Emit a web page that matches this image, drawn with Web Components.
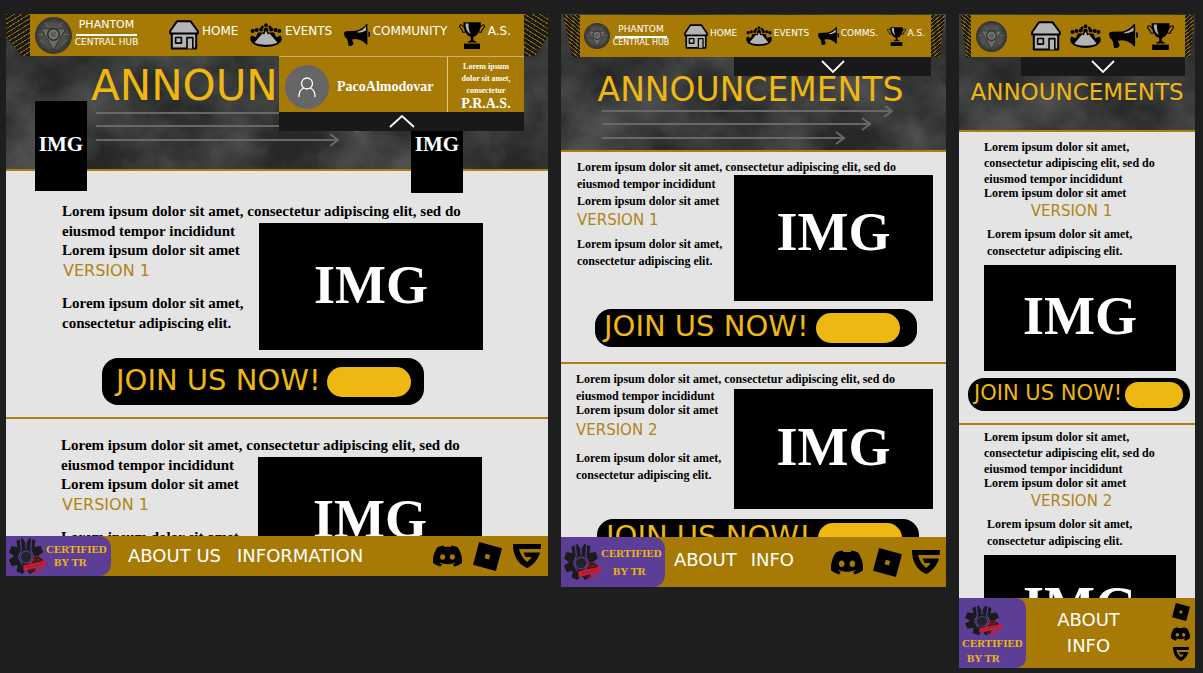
<!DOCTYPE html>
<html lang="en">
<head>
<meta charset="utf-8">
<meta name="viewport" content="width=device-width, initial-scale=1">
<title>Phantom Central Hub</title>
<style>
  :root {
    --gold: #a67a05;
    --yellow: #eeb711;
    --ink: #191919;
    --paper: #e4e4e4;
    --purple: #5c3e96;
    --display: "DejaVu Sans", sans-serif;
    --serif: "Liberation Serif", serif;
  }
  body { margin: 0; background: #1e1e1e; font-family: var(--serif); }
</style>
</head>
<body>
<design-board>
  <site-frame size="wide">
    <site-hero slot="top" size="wide">
      <site-header slot="header" size="wide">
        <nav-item icon="home" size="wide">HOME</nav-item>
        <nav-item icon="events" size="wide">EVENTS</nav-item>
        <nav-item icon="horn" size="wide">COMMUNITY</nav-item>
        <nav-item icon="trophy" size="wide">A.S.</nav-item>
      </site-header>
      ANNOUNCEMENTS
    </site-hero>
    <news-card size="wide" version="VERSION 1" first></news-card>
    <news-card size="wide" version="VERSION 1" plain></news-card>
    <site-footer slot="bottom" size="wide">
      <a href="#about">ABOUT US</a><a href="#info">INFORMATION</a>
    </site-footer>
  </site-frame>

  <site-frame size="mid">
    <site-hero slot="top" size="mid">
      <site-header slot="header" size="mid">
        <nav-item icon="home" size="mid">HOME</nav-item>
        <nav-item icon="events" size="mid">EVENTS</nav-item>
        <nav-item icon="horn" size="mid">COMMS.</nav-item>
        <nav-item icon="trophy" size="mid">A.S.</nav-item>
      </site-header>
      ANNOUNCEMENTS
    </site-hero>
    <news-card size="mid" version="VERSION 1" first></news-card>
    <news-card size="mid" version="VERSION 2"></news-card>
    <site-footer slot="bottom" size="mid">
      <a href="#about">ABOUT</a><a href="#info">INFO</a>
    </site-footer>
  </site-frame>

  <site-frame size="narrow">
    <site-hero slot="top" size="narrow">
      <site-header slot="header" size="narrow">
        <nav-item icon="home" size="narrow" label="Home"></nav-item>
        <nav-item icon="events" size="narrow" label="Events"></nav-item>
        <nav-item icon="horn" size="narrow" label="Community"></nav-item>
        <nav-item icon="trophy" size="narrow" label="A.S."></nav-item>
      </site-header>
      ANNOUNCEMENTS
    </site-hero>
    <news-card size="narrow" version="VERSION 1" first></news-card>
    <news-card size="narrow" version="VERSION 2" plain></news-card>
    <site-footer slot="bottom" size="narrow">
      <a href="#about">ABOUT</a><a href="#info">INFO</a>
    </site-footer>
  </site-frame>
</design-board>

<script>
class Base extends HTMLElement {
  constructor() {
    super();
    this.attachShadow({ mode: 'open' });
  }
  connectedCallback() {
    this.shadowRoot.innerHTML = this.render();
  }
  get size() { return this.getAttribute('size') || 'wide'; }
}

/* ---------- icons ---------- */
const gearTeeth = [22, 67, 112, 157, 202, 247, 292, 337]
  .map(a => `<path d="M15.500 1h7l1.500 8H14z" transform="rotate(${a} 19 19)"/>`).join('');

const ICONS = {
  home: ['0 0 30 30', `<g fill="#b4b4b4" stroke="#000" stroke-width="2" stroke-linejoin="round">
      <path d="M2.8 13h24.4v15.6H2.8z"/>
      <path d="M8 1.3h13.6L28.8 11v2.6H1.2V11z"/>
      <path d="M6.600 17.500h5.800v5.600H6.600zM18 28.400V17.600h5.800v10.800" stroke-width="1.600"/></g>`],
  events: ['0 0 32 24', `<path d="M1.400 12.500C.2 14 0 16 .6 17.600 2.400 22 9 24 16 24s13.600-2 15.400-6.400c.6-1.600.4-3.600-.8-5.100L27 14H5z"/>
      <path d="M6 14 8 9.500h16L26 14z"/>
      <g><circle cx="2.600" cy="8" r="2"/><circle cx="6.600" cy="7" r="2"/><circle cx="11" cy="6.600" r="2"/><circle cx="16" cy="2.200" r="1.900"/><circle cx="12.400" cy="4" r="1.500"/><circle cx="19.800" cy="4" r="1.500"/><circle cx="21.400" cy="6.600" r="2"/><circle cx="25.600" cy="7" r="2"/><circle cx="29.400" cy="8" r="2"/><path d="M13.800 10V6q2.200-3 4.400 0v4z"/></g>
      <path d="M4.600 19.600 12.400 10.600l1.800.8L16 7.400l1.800 4 1.800-.8L27.400 19.600C23.500 22.600 8.500 22.600 4.600 19.600z" fill="#b4b4b4"/>`],
  horn: ['0 0 26 22', `<path d="M0 9.6C0 8 1 7.4 2.4 7.2L12 6.8C16 6 20 3.4 22.4 0h1V20.4h-1c-2.4-3-6-4.600-10-5.400l-4.500.4 1.700 4.400-1.600 2-3.400.2-1-5.600L2.400 14 1 13.400z"/>
      <path d="M24.400 7.400l1.600.8v4l-1.600.8z"/><path d="M13.600 7.800Q19 6.400 22 2.600v3.800Q18 8.600 13.600 8.800z" fill="#b4b4b4"/>`],
  trophy: ['0 0 26 27', `<path d="M4.400.2h17.400C21.800 8 19 13.600 14.400 15v3.200l3 1.600v.6H8.800v-.6l3-1.600V15C7.200 13.600 4.400 8 4.400.2z"/>
      <path d="M5 5.600C4 2.600.600 2 .600 4.400c0 2 3 2.200 3 5.600 2.400.8 3.400-.6 2.800-2M21.200 5.600c1-3 4.300-3.600 4.300-1.200 0 2-3 2.200-3 5.600-2.400.8-3.400-.6-2.800-2" fill="none" stroke="#000" stroke-width="1.100"/>
      <path d="M5 21.600h16V27H5z"/><path d="M6.500 1.500h3c0 4 .6 8 2 10.400C8.500 10.500 6.500 6.500 6.500 1.500z" fill="#b4b4b4"/>`],
  discord: ['0 2.500 24 19', `<path d="M20.317 4.3698a19.7913 19.7913 0 00-4.8851-1.5152.0741.0741 0 00-.0785.0371c-.211.3753-.4447.8648-.6083 1.2495-1.8447-.2762-3.68-.2762-5.4868 0-.1636-.3933-.4058-.8742-.6177-1.2495a.077.077 0 00-.0785-.037 19.7363 19.7363 0 00-4.8852 1.515.0699.0699 0 00-.0321.0277C.5334 9.0458-.319 13.5799.0992 18.0578a.0824.0824 0 00.0312.0561c2.0528 1.5076 4.0413 2.4228 5.9929 3.0294a.0777.0777 0 00.0842-.0276c.4616-.6304.8731-1.2952 1.226-1.9942a.076.076 0 00-.0416-.1057c-.6528-.2476-1.2743-.5495-1.8722-.8923a.077.077 0 01-.0076-.1277c.1258-.0943.2517-.1923.3718-.2914a.0743.0743 0 01.0776-.0105c3.9278 1.7933 8.18 1.7933 12.0614 0a.0739.0739 0 01.0785.0095c.1202.099.246.1981.3728.2924a.077.077 0 01-.0066.1276 12.2986 12.2986 0 01-1.873.8914.0766.0766 0 00-.0407.1067c.3604.698.7719 1.3628 1.225 1.9932a.076.076 0 00.0842.0286c1.961-.6067 3.9495-1.5219 6.0023-3.0294a.077.077 0 00.0313-.0552c.5004-5.177-.8382-9.6739-3.5485-13.6604a.061.061 0 00-.0312-.0286zM8.02 15.3312c-1.1825 0-2.1569-1.0857-2.1569-2.419 0-1.3332.9555-2.4189 2.157-2.4189 1.2108 0 2.1757 1.0952 2.1568 2.419 0 1.3332-.9555 2.4189-2.1569 2.4189zm7.9748 0c-1.1825 0-2.1569-1.0857-2.1569-2.419 0-1.3332.9554-2.4189 2.1569-2.4189 1.2108 0 2.1757 1.0952 2.1568 2.419 0 1.3332-.946 2.4189-2.1568 2.4189Z"/>`],
  roblox: ['0 0 24 24', `<path fill-rule="evenodd" d="M18.926 23.998 0 18.892 5.075.002 24 5.108zM14.200 10.800l-3.600-1-1 3.600 3.600 1z"/>`],
  guilded: ['0 0 28 24', `<path d="M0 0H28L27.700 5H6C7 9 9.500 14.500 14 18C16 16.500 17.500 15 18.600 13H12.500L10.500 8.500H27C25.500 15 20 21.500 14 24C5 20 0 12 0 0Z"/>`],
  user: ['0 0 44 44', `<circle cx="22" cy="22" r="22" fill="#666"/><g fill="none" stroke="#fff" stroke-width="1.300"><circle cx="22" cy="18.500" r="5.500"/><path d="M14 32q0-7.500 5-9M30 32q0-7.500-5-9"/></g>`],
  emblem: ['0 0 36 36', `<defs><radialGradient id="e"><stop offset="0" stop-color="#5c5c5a"/><stop offset=".7" stop-color="#4c4d4b"/><stop offset="1" stop-color="#333"/></radialGradient></defs>
      <circle cx="18" cy="18" r="17.300" fill="url(#e)" stroke="#3a3a38" stroke-width="1.400"/>
      <path d="M6 11.500h24L18 32z" fill="#6b6c69" stroke="#343432"/><path d="M9 5l5 5M27 5l-5 5M5 22l4 4M31 22l-5 5M3 17h5M28 17h5" stroke="#666663"/>
      <circle cx="18" cy="17" r="5.600" fill="#747471" stroke="#31312f" stroke-width="1.600"/><circle cx="18" cy="17" r="2.800" fill="#5c5c59"/>`],
  gear: ['0 0 40 38', `<g fill="#191b1c">${gearTeeth}<circle cx="19" cy="19" r="13"/></g>
      <path d="M13 1l1 12-3 7 4 8M25 1l-1 12 3 7-4 8M19 0v12" fill="none" stroke="#57408e" stroke-width="1.300"/>
      <circle cx="19" cy="20" r="6" fill="#202426" stroke="#4f3984" stroke-width="1.300"/>
      <g fill="none" stroke="#d31b2c" stroke-width=".7"><ellipse cx="30" cy="28" rx="8" ry="8.500"/><ellipse cx="30" cy="28" rx="5.500" ry="6"/><path d="M24 25l11 9M26 22l9 9M24 31l9-9M27 35l9-9"/></g>
      <path d="M16 28.500l24-5-.6 5-23 5.500z" fill="#d31b2c"/><path d="M20 30.200l3-.7m1.500-.3 3-.7m1.500-.3 3-.7m1.500-.3 2.500-.6" stroke="#7d2848" stroke-width="1.400"/>`],
  up: ['0 0 26 13', `<path d="M1 12 13 1l12 11" fill="none" stroke="#fff" stroke-width="1.800"/>`],
  down: ['0 0 24 13', `<path d="M1 1l11 11L23 1" fill="none" stroke="#fff" stroke-width="1.800"/>`],
};

customElements.define('ui-icon', class extends Base {
  render() {
    const [box, body] = ICONS[this.getAttribute('name')];
    return `<style>
      :host { display: block; flex: none; }
      svg { display: block; width: 100%; height: 100%; }
    </style><svg viewBox="${box}" preserveAspectRatio="none" aria-hidden="true">${body}</svg>`;
  }
});

/* ---------- page scaffolding ---------- */
customElements.define('design-board', class extends Base {
  render() {
    return `<style>
      :host {
        display: grid;
        grid-template-columns: 542fr 385fr 236fr;
        gap: 13px;
        align-items: start;
        padding: 14px 8px 4px 6px;
      }
    </style><slot></slot>`;
  }
});

customElements.define('site-frame', class extends Base {
  render() {
    const h = { wide: 562, mid: 573, narrow: 654 }[this.size];
    return `<style>
      :host { display: flex; flex-direction: column; height: ${h}px; min-width: 0; }
      main { flex: 1; min-height: 0; overflow: hidden; background: var(--paper); }
    </style><slot name="top"></slot><main><slot></slot></main><slot name="bottom"></slot>`;
  }
});

customElements.define('site-hero', class extends Base {
  render() {
    const s = this.size;
    const lines = [290, 268, 242].map((w, i) => {
      const y = [5, 18, 32][i];
      return `<path d="M0 ${y}H${w}M${w - 8} ${y - 6}L${w} ${y}L${w - 8} ${y + 6}"/>`;
    }).join('');
    return `<style>
      :host {
        display: block; position: relative; z-index: 1; box-sizing: border-box;
        border-bottom: 2px solid #ab7f10; background: #272828;
      }
      :host([size=wide]) { height: 157px; }
      :host([size=mid]) { height: 138px; }
      :host([size=narrow]) { height: 118px; }
      .rock { position: absolute; inset: 0; width: 100%; height: 100%; }
      .over { position: relative; }
      h1 { margin: 0; font: 42px/44px var(--display); color: var(--yellow); white-space: nowrap; }
      .lines { display: block; width: 300px; height: 40px; fill: none; stroke: #686868; stroke-width: 2; }
      :host([size=wide]) h1 { margin: 8px 0 0 85px; }
      :host([size=wide]) .lines { margin-left: 90px; }
      :host([size=mid]) h1 { margin: 17px 6px 0 0; font-size: 33px; line-height: 32px; text-align: center; }
      :host([size=mid]) .lines { margin-left: 41px; }
      :host([size=narrow]) h1 { margin-top: 23px; font-size: 23px; line-height: 24px; text-align: center; }
      .img {
        position: absolute; top: 87px; box-sizing: border-box; width: 52px; height: 90px;
        padding-top: 31px; background: #000; color: #fff; text-align: center;
        font: bold 21px/24px var(--serif);
      }
      .one { left: 29px; }
      .two { left: 405px; height: 92px; }
      .head { position: relative; z-index: 2; }
    </style>
    <svg class="rock" aria-hidden="true">
      <filter id="r" x="0" y="0" width="100%" height="100%">
        <feTurbulence type="fractalNoise" baseFrequency=".012 .016" numOctaves="5" seed="7"/>
        <feColorMatrix values="0 0 0 0 .25  0 0 0 0 .27  0 0 0 0 .25  2.200 0 0 0 -.7"/>
      </filter>
      <filter id="d" x="0" y="0" width="100%" height="100%">
        <feTurbulence type="fractalNoise" baseFrequency=".03" numOctaves="4" seed="21"/>
        <feColorMatrix values="0 0 0 0 .1  0 0 0 0 .1  0 0 0 0 .1  0 3 0 0 -1.500"/>
      </filter>
      <rect width="100%" height="100%" filter="url(#r)" opacity=".4"/>
      <rect width="100%" height="100%" filter="url(#d)" opacity=".35"/>
    </svg>
    <div class="over">
      <div class="head"><slot name="header"></slot></div>
      <h1><slot></slot></h1>
      ${s === 'narrow' ? '' : `<svg class="lines" viewBox="0 0 300 40" aria-hidden="true">${lines}</svg>`}
    </div>
    ${s === 'wide' ? '<div class="img one">IMG</div><div class="img two">IMG</div>' : ''}`;
  }
});
</script>
<script>
customElements.define('site-header', class extends Base {
  render() {
    const s = this.size;
    return `<style>
      :host { display: flex; position: relative; z-index: 3; height: 42px; }
      :host([size=wide]) { --left: 24px; --right: 24px; --disc: 37px; }
      :host([size=mid]) { --left: 19px; --right: 15px; --disc: 26px; padding-top: 1px; }
      :host([size=narrow]) { --left: 12px; --right: 10px; --disc: 31px; padding-top: 1px; }
      .hatch { flex: none; --stripe: #866407; }
      .l { width: var(--left); background: repeating-linear-gradient(148deg, var(--stripe) 0 1px, var(--ink) 1px 4px); clip-path: polygon(0 0, 100% 0, 100% 100%, 65% 100%, 0 55%); }
      .r { width: var(--right); background: repeating-linear-gradient(212deg, var(--stripe) 0 1px, var(--ink) 1px 4px); clip-path: polygon(0 0, 100% 0, 100% 55%, 45% 100%, 0 100%); }
      :host([size=mid]) .l, :host([size=narrow]) .l { background: repeating-linear-gradient(220deg, var(--stripe) 0 1px, var(--ink) 1px 3px); clip-path: polygon(10% 0, 100% 0, 100% 100%, 60% 100%); }
      :host([size=mid]) .r, :host([size=narrow]) .r { background: repeating-linear-gradient(140deg, var(--stripe) 0 1px, var(--ink) 1px 3px); clip-path: polygon(0 0, 95% 0, 55% 100%, 0 100%); }
      .bar { flex: 1; min-width: 0; display: flex; align-items: center; background: var(--gold); padding-left: 5px; }
      .disc { width: var(--disc); height: var(--disc); }
      .brand { flex: none; color: #fff; font-family: var(--display); text-align: center; margin-left: 1px; width: 67px; text-decoration: none; white-space: nowrap; }
      .brand b { display: block; font-weight: normal; font-size: 11px; line-height: 18px; }
      .brand i { display: block; height: 2px; background: #fff; margin: 0 3px; }
      .brand small { display: block; font-size: 9px; line-height: 12px; }
      :host([size=wide]) .brand { margin-bottom: 6px; }
      :host([size=mid]) .bar { padding-left: 4px; }
      :host([size=mid]) .brand { width: 58px; margin-left: 2px; margin-bottom: 2px; }
      :host([size=mid]) .brand b { font-size: 9px; line-height: 14px; }
      :host([size=mid]) .brand small { font-size: 8px; line-height: 10px; }
      nav { flex: 1; display: flex; align-items: center; justify-content: space-between; margin: 0 13px 0 29px; }
      :host([size=mid]) nav { margin: 0 6px 0 14px; }
      :host([size=narrow]) nav { margin: 0 11px 0 24px; }
      .tab { position: absolute; top: 100%; right: var(--right); display: grid; width: 245px; }
      .tab button { display: grid; place-items: center; height: 19px; padding: 0; border: 0; background: var(--ink); }
      .tab ui-icon { width: 24px; height: 13px; }
      :host([size=wide]) .tab button ui-icon { width: 26px; }
      :host([size=mid]) .tab { width: 197px; }
      :host([size=narrow]) .tab { width: 164px; }
      .panel { display: flex; height: 56px; box-sizing: border-box; background: var(--gold); border-top: 1px solid #c9b06f; color: #fff; font-weight: bold; }
      .who { flex: 1; display: flex; align-items: center; gap: 8px; padding: 4px 0 0 6px; border-right: 1px solid #dcc68a; font-size: 14px; line-height: 20px; }
      .who ui-icon { width: 44px; height: 44px; }
      .note { width: 76px; text-align: center; font-size: 8px; line-height: 12px; padding-top: 4px; }
      .note p { margin: 0 8px; }
      .note strong { display: block; font-size: 14px; line-height: 14px; }
    </style>
    <div class="hatch l"></div>
    <div class="bar">
      <ui-icon class="disc" name="emblem"></ui-icon>
      ${s === 'narrow' ? '' : '<a class="brand" href="#top"><b>PHANTOM</b><i></i><small>CENTRAL HUB</small></a>'}
      <nav><slot></slot></nav>
    </div>
    <div class="hatch r"></div>
    <div class="tab">
      ${s === 'wide' ? `<div class="panel">
        <div class="who"><ui-icon name="user"></ui-icon>PacoAlmodovar</div>
        <div class="note"><p>Lorem ipsum dolor sit amet, consectetur</p><strong>P.R.A.S.</strong></div>
      </div>` : ''}
      <button type="button" aria-label="Account panel"><ui-icon name="${s === 'wide' ? 'up' : 'down'}"></ui-icon></button>
    </div>`;
  }
});

customElements.define('nav-item', class extends Base {
  render() {
    const icon = this.getAttribute('icon');
    const label = this.getAttribute('label');
    const [w, h] = {
      wide: { home: [30, 30], events: [32, 24], horn: [26, 22], trophy: [26, 27] },
      mid: { home: [24, 25], events: [26, 20], horn: [21, 18], trophy: [19, 19] },
      narrow: { home: [30, 30], events: [31, 24], horn: [29, 24], trophy: [27, 27] },
    }[this.size][icon];
    return `<style>
      :host { display: block; }
      a { display: flex; align-items: center; gap: 3px; color: #fff; text-decoration: none; font: 12px/14px var(--display); white-space: nowrap; }
      span { padding-bottom: 9px; }
      :host([size=mid]) a { font-size: 9px; line-height: 12px; gap: 2px; }
      :host([size=mid]) span { padding-bottom: 6px; }
      ui-icon { width: ${w}px; height: ${h}px; }
    </style><a href="#${icon}"${label ? ` aria-label="${label}"` : ''}><ui-icon name="${icon}"></ui-icon>${label ? '' : '<span><slot></slot></span>'}</a>`;
  }
});

/* ---------- announcements ---------- */
customElements.define('join-button', class extends Base {
  render() {
    return `<style>
      :host { display: block; }
      button {
        display: flex; align-items: center; justify-content: space-between; box-sizing: border-box;
        width: 322px; height: 47px; padding: 0 13px 0 14px; border: 0; border-radius: 16px;
        background: #000; color: var(--yellow); font: 29px/36px var(--display); white-space: nowrap;
      }
      .txt { padding-bottom: 4px; }
      .pill { width: 84px; height: 30px; border-radius: 15px; background: var(--yellow); }
      :host([size=mid]) button { height: 38px; padding: 0 17px 0 9px; }
      :host([size=narrow]) button { width: 222px; height: 33px; padding: 0 7px 0 6px; font-size: 21px; line-height: 24px; }
      :host([size=narrow]) .pill { width: 58px; height: 26px; }
    </style><button type="button"><span class="txt">JOIN US NOW!</span><span class="pill"></span></button>`;
  }
});

customElements.define('news-card', class extends Base {
  render() {
    return `<style>
      :host {
        display: block; border-bottom: 2px solid #ab7f10; color: #000;
        font: bold 15px/20px var(--serif);
      }
      .body { display: grid; grid-template-columns: 1fr 224px; grid-template-rows: auto auto auto 1fr; padding: 16px 66px 0 55px; }
      :host([first]) .body { padding: 30px 65px 0 56px; }
      p, h2, figure { margin: 0; }
      .lead { grid-area: 1 / 1 / 2 / 3; }
      .sub { grid-area: 2 / 1; line-height: 18px; }
      h2 { grid-area: 3 / 1; font: 16px/24px var(--display); color: #ae8417; padding-left: 1px; }
      .more { grid-area: 4 / 1; padding-top: 10px; }
      figure { grid-area: 1 / 2 / 5 / 3; display: grid; place-items: center; box-sizing: border-box; margin-top: 22px; padding-bottom: 4px; height: 127px; background: #000; color: #fff; font-size: 54px; line-height: 60px; }
      join-button { margin: 8px 0 12px 96px; }

      :host([size=mid]) { font-size: 12px; line-height: 17px; }
      :host([size=mid]) .body { grid-template-columns: 1fr 199px; padding: 7px 13px 0 15px; }
      :host([size=mid][first]) .body { padding-left: 16px; }
      :host([size=mid]) .sub { line-height: 10px; }
      :host([size=mid]) h2 { font-size: 15px; line-height: 22px; padding: 4px 0 0 0; }
      :host([size=mid]) .more { padding-top: 9px; }
      :host([size=mid]) figure { margin-top: 18px; height: 120px; }
      :host([size=mid]) join-button { margin: 10px 0 15px 36px; }
      :host([size=mid][first]) .sub { line-height: 16px; }
      :host([size=mid][first]) h2 { padding-top: 0; }
      :host([size=mid][first]) .more { padding-top: 5px; }
      :host([size=mid][first]) figure { margin-top: 16px; height: 126px; padding-bottom: 12px; }
      :host([size=mid][first]) join-button { margin: 8px 0 15px 34px; }

      :host([size=narrow]) { font-size: 12px; line-height: 16px; }
      :host([size=narrow]) .body { display: block; padding: 4px 19px 0 25px; }
      :host([size=narrow][first]) .body { padding-top: 7px; }
      :host([size=narrow]) .sub { line-height: 12px; }
      :host([size=narrow]) h2 { font-size: 15px; line-height: 24px; padding: 0 17px 0 0; text-align: center; }
      :host([size=narrow]) .more { padding: 3px 40px 0 3px; line-height: 17px; }
      :host([size=narrow]) figure { margin-top: 5px; height: 106px; }
      :host([size=narrow]) join-button { margin: 7px 0 12px 9px; }
    </style>
    <article>
      <div class="body">
        <p class="lead">Lorem ipsum dolor sit amet, consectetur adipiscing elit, sed do eiusmod tempor incididunt</p>
        <p class="sub">Lorem ipsum dolor sit amet</p>
        <h2>${this.getAttribute('version')}</h2>
        <p class="more">Lorem ipsum dolor sit amet, consectetur adipiscing elit.</p>
        <figure>IMG</figure>
      </div>
      ${this.hasAttribute('plain') ? '' : `<join-button size="${this.size}"></join-button>`}
    </article>`;
  }
});

/* ---------- footer ---------- */
customElements.define('site-footer', class extends Base {
  render() {
    const order = this.size === 'narrow' ? ['roblox', 'discord', 'guilded'] : ['discord', 'roblox', 'guilded'];
    return `<style>
      :host { display: flex; flex: none; height: 40px; background: var(--gold); color: #fff; font: 18px/26px var(--display); position: relative; }
      .cert { display: flex; align-items: center; box-sizing: border-box; width: 105px; padding-left: 2px; background: var(--purple); border-radius: 0 12px 12px 0; color: var(--yellow); font: bold 11px/13px var(--serif); }
      .cert ui-icon { width: 38px; height: 38px; }
      .cert p { margin: 0; width: 62px; }
      .cert span { display: block; }
      .cert .by { padding-left: 8px; }
      .links { display: flex; align-items: center; gap: 16px; margin-left: 17px; }
      ::slotted(a) { color: #fff; text-decoration: none; }
      .social { display: flex; align-items: center; gap: 11px; margin: 0 7px 0 auto; }
      .social a { display: block; }
      .discord { width: 29px; height: 22px; }
      .roblox { width: 29px; height: 29px; }
      .guilded { width: 28px; height: 24px; }

      :host([size=mid]) { height: 50px; }
      :host([size=mid]) .cert { line-height: 18px; width: 104px; }
      :host([size=mid]) .cert .by { padding-left: 12px; }
      :host([size=mid]) .links { margin: 0 0 4px 9px; gap: 14px; }
      :host([size=mid]) .social { margin-right: 6px; gap: 10px; }
      :host([size=mid]) .discord { width: 32px; height: 25px; }

      :host([size=narrow]) { height: 70px; }
      :host([size=narrow]) .cert { flex-direction: column; align-items: flex-start; width: 67px; line-height: 15px; padding: 7px 0 0 3px; border-radius: 0 10px 10px 0; }
      :host([size=narrow]) .cert ui-icon { height: 31px; margin-left: 2px; }
      :host([size=narrow]) .cert .by { padding-left: 5px; }
      :host([size=narrow]) .links { flex: 1; flex-direction: column; gap: 0; justify-content: center; margin: 0 20px 0 0; }
      :host([size=narrow]) .social { flex-direction: column; gap: 6px; margin: 0 5px 3px 0; justify-content: center; }
      :host([size=narrow]) .roblox { width: 18px; height: 18px; }
      :host([size=narrow]) .discord { width: 19px; height: 14px; }
      :host([size=narrow]) .guilded { width: 16px; height: 14px; }
    </style>
    <div class="cert"><ui-icon name="gear"></ui-icon><p><span>CERTIFIED</span><span class="by">BY TR</span></p></div>
    <div class="links"><slot></slot></div>
    <div class="social">${order.map(n => `<a href="#${n}" aria-label="${n}"><ui-icon class="${n}" name="${n}"></ui-icon></a>`).join('')}</div>`;
  }
});
</script>
</body>
</html>
